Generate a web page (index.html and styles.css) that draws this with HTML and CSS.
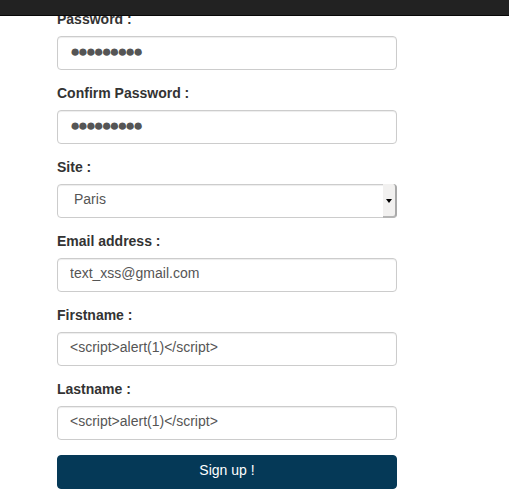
FILE: index.html
```html
<!DOCTYPE html>
<html>
<head>
<meta charset="utf-8">
<link rel="stylesheet" href="styles.css">
</head>
<body>
<div class="navbar"></div>
<form class="form">
  <div class="group">
    <label class="lbl">Password :</label>
    <input class="ctl pwd" type="text" value="●●●●●●●●●" readonly>
  </div>
  <div class="group">
    <label class="lbl">Confirm Password :</label>
    <input class="ctl pwd" type="text" value="●●●●●●●●●" readonly>
  </div>
  <div class="group">
    <label class="lbl">Site :</label>
    <div class="select-wrap">
      <select class="ctl sel"><option>Paris</option></select>
      <span class="sel-btn"><span class="tri"></span></span>
    </div>
  </div>
  <div class="group">
    <label class="lbl">Email address :</label>
    <input class="ctl" type="text" value="text_xss@gmail.com">
  </div>
  <div class="group">
    <label class="lbl">Firstname :</label>
    <input class="ctl" type="text" value="&lt;script&gt;alert(1)&lt;/script&gt;">
  </div>
  <div class="group">
    <label class="lbl">Lastname :</label>
    <input class="ctl" type="text" value="&lt;script&gt;alert(1)&lt;/script&gt;">
  </div>
  <button class="btn" type="button">Sign up !</button>
</form>
</body>
</html>
```

FILE: styles.css
```css
html, body {
  margin: 0;
  padding: 0;
  background: #fff;
  font-family: "Liberation Sans", Arial, sans-serif;
  font-size: 14px;
  line-height: 20px;
  color: #333;
}
.navbar {
  position: fixed;
  top: 0;
  left: 0;
  right: 0;
  height: 15px;
  background: #222;
  border-bottom: 1px solid #080808;
  z-index: 10;
}
.form {
  width: 340px;
  padding: 11px 0 0 57px;
  display: flex;
  flex-direction: column;
}
.group {
  display: flex;
  flex-direction: column;
  margin-bottom: 15px;
}
.lbl {
  font-weight: bold;
  margin-bottom: 5px;
  line-height: 16px;
  padding-bottom: 4px;
  color: #333;
}
.ctl {
  box-sizing: border-box;
  display: block;
  width: 340px;
  height: 34px;
  padding: 4px 12px 8px;
  font-family: "Liberation Sans", Arial, sans-serif;
  font-size: 14px;
  line-height: 20px;
  color: #555;
  background: #fff;
  border: 1px solid #ccc;
  border-radius: 4px;
  box-shadow: inset 0 1px 1px rgba(0,0,0,0.075);
  margin: 0;
  outline: none;
}
.pwd {
  font-size: 17px;
  padding-top: 5px;
  padding-bottom: 7px;
  letter-spacing: -2.4px;
}
.select-wrap {
  position: relative;
  width: 340px;
  height: 34px;
}
.sel {
  appearance: none;
  -webkit-appearance: none;
  padding-left: 16px;
}
.sel-btn {
  position: absolute;
  top: 0;
  right: 0;
  width: 14px;
  height: 34px;
  box-sizing: border-box;
  background: #f2f1f0;
  border-right: 2px solid #a9a9a9;
  border-bottom: 2px solid #b5b5b5;
  border-radius: 0 4px 4px 0;
  display: flex;
  align-items: center;
  justify-content: center;
}
.tri {
  width: 0;
  height: 0;
  border-left: 3px solid transparent;
  border-right: 3px solid transparent;
  border-top: 4px solid #000;
  margin-top: 2px;
}
.btn {
  box-sizing: border-box;
  width: 340px;
  height: 34px;
  padding: 4px 12px 8px;
  font-family: "Liberation Sans", Arial, sans-serif;
  font-size: 14px;
  line-height: 20px;
  color: #fff;
  background: #053957;
  border: 1px solid #053957;
  border-radius: 4px;
  text-align: center;
  margin: 0;
}
```
